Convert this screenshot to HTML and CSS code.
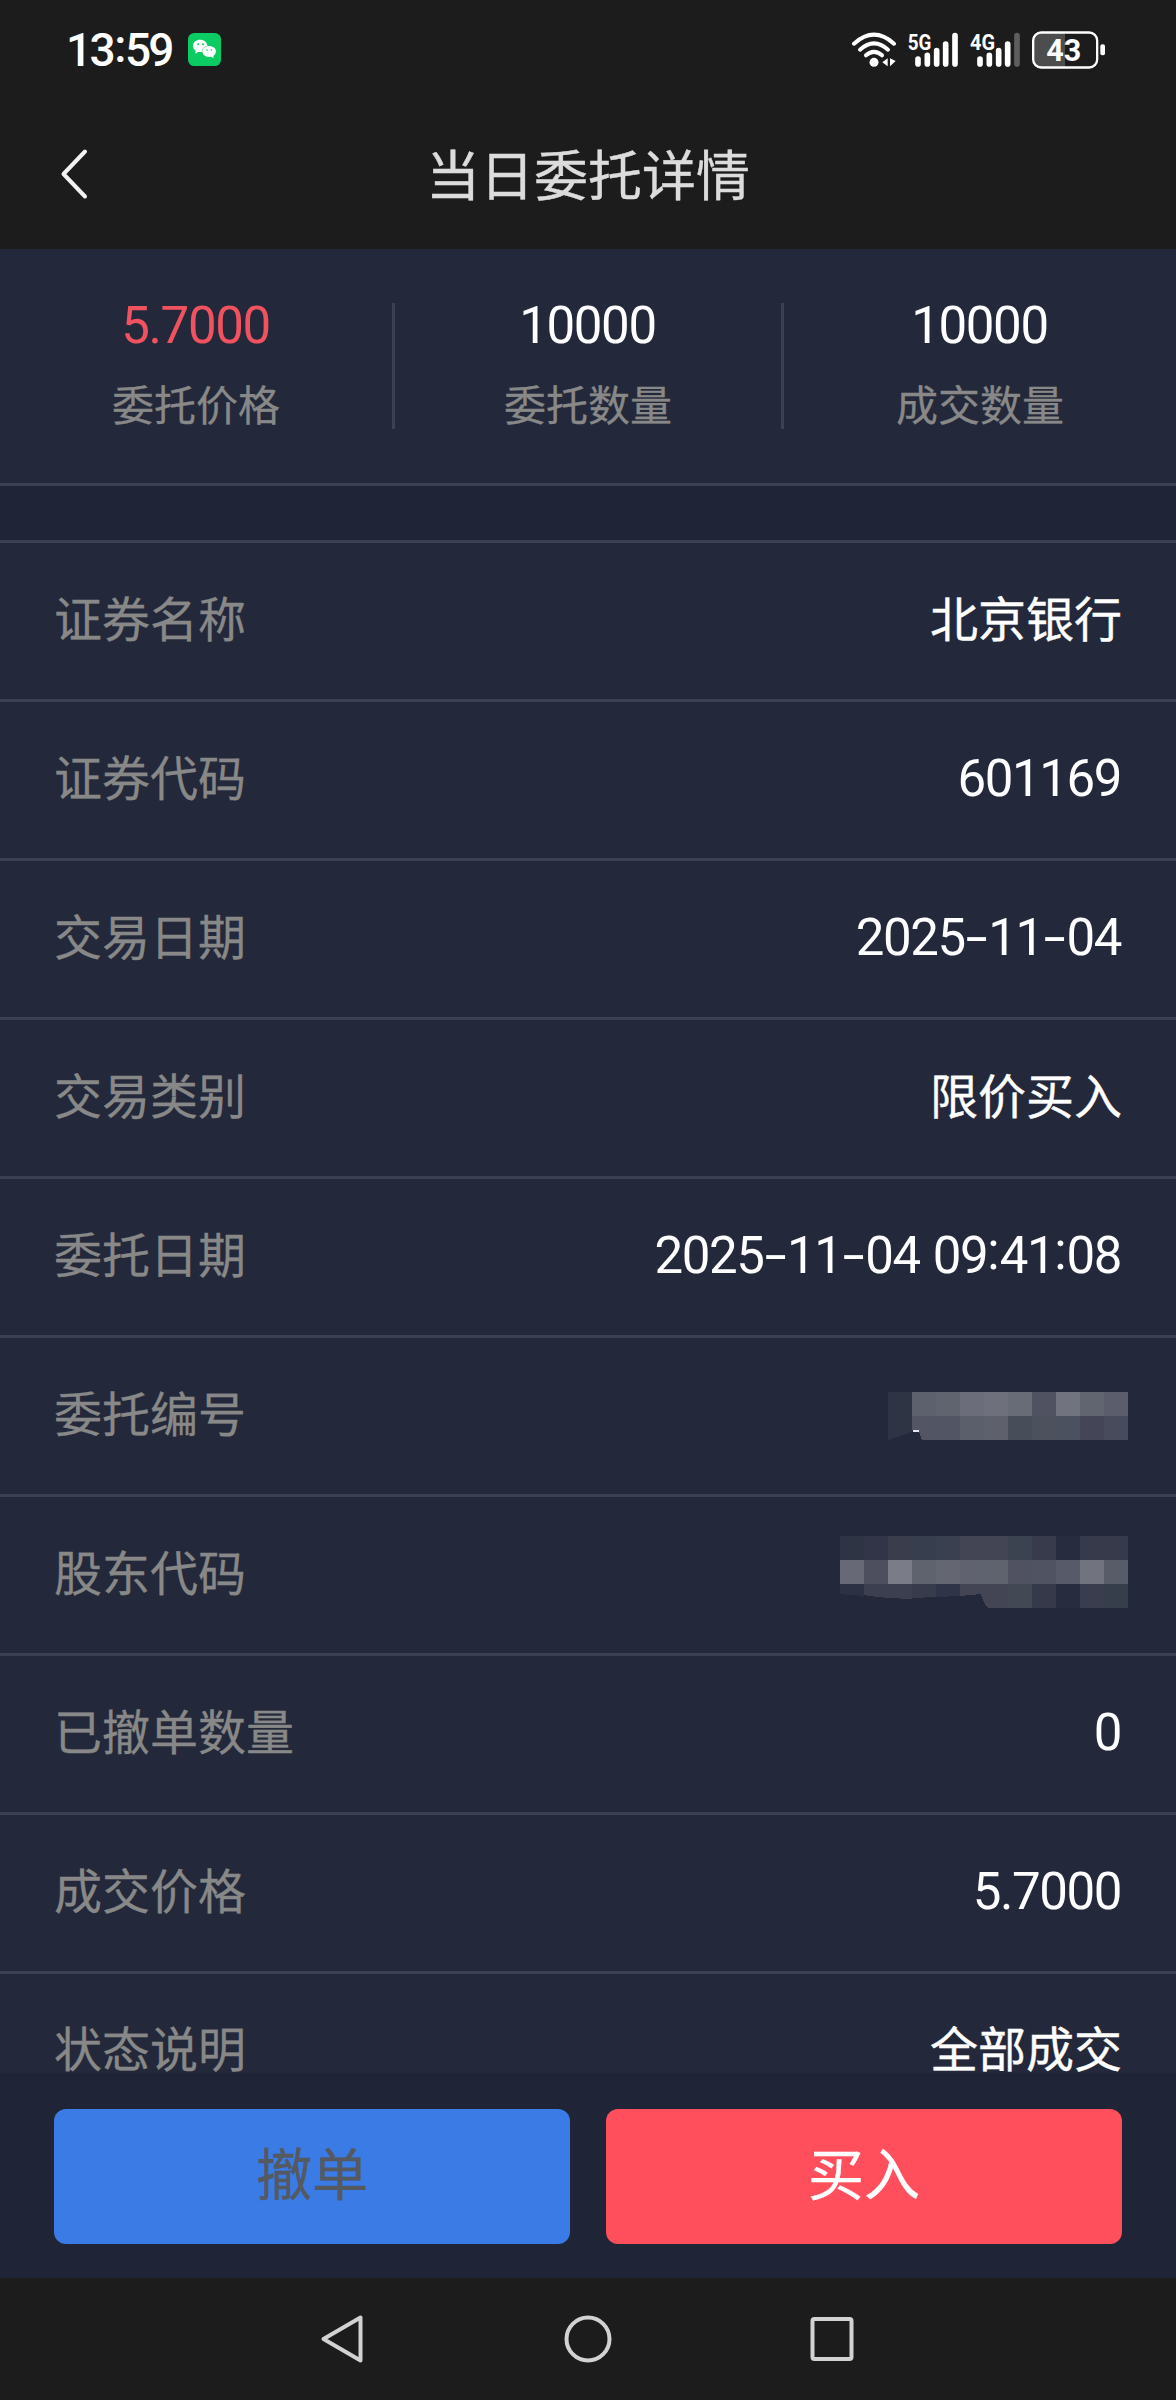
FILE: index.html
```html
<!DOCTYPE html>
<html lang="zh-CN">
<head>
<meta charset="utf-8">
<title>当日委托详情</title>
<link rel="stylesheet" href="styles.css">
</head>
<body>
<div class="screen">
  <div class="status-bar">
    <div class="status-left">
      <span class="clock">13<span class="clock-colon">:</span>59</span>
      <svg class="wechat" viewBox="0 0 99 99">
        <rect width="99" height="99" rx="19" fill="#0bcb63"/>
        <path d="M36 20C24 20 15 28 15 38C15 44 18 49 23 53L22 62L30 57Q36 58 42 56Q41 42 58 38C58 28 48 20 36 20Z" fill="#fff"/>
        <path d="M63 39C51 39 43 46 43 55C43 65 52 72 63 72L69 71L77 75L76 69Q84 64 84 55C84 46 75 39 63 39Z" fill="#fff"/>
        <g fill="#0bcb63"><circle cx="31" cy="34" r="3"/><circle cx="45" cy="34" r="3"/><circle cx="57" cy="51" r="2.5"/><circle cx="70" cy="51" r="2.5"/></g>
      </svg>
    </div>
    <svg class="status-icons" viewBox="60 50 780 135">
      <g fill="none" stroke="#fff" stroke-width="12" stroke-linecap="round">
        <path d="M72 100Q132 46 192 100"/>
        <path d="M90 118Q132 80 174 118"/>
        <path d="M108 135Q132 114 156 135"/>
      </g>
      <circle cx="132" cy="156" r="13.500" fill="#fff"/>
      <path d="M157 156L173 144V168ZM197 152L180 144V168Z" fill="#fff"/>
      <g class="network-type"><text x="233" y="118" textLength="71" lengthAdjust="spacingAndGlyphs">5G</text><text x="420" y="118" textLength="75" lengthAdjust="spacingAndGlyphs">4G</text></g>
      <g stroke="#fff" stroke-width="17" stroke-linecap="round">
        <path d="M264 146V161M292 135V161M320 121V161M347 101V161M375 76V161"/>
        <path d="M450 146V161M478 135V161M506 121V161M533 101V161"/>
        <path d="M561 76V161" stroke="#5e5e5e"/>
      </g>
      <path d="M632 68H705V169H632Q611 169 611 148V89Q611 68 632 68Z" fill="#4d4d4d"/>
      <rect x="609.500" y="66.500" width="192" height="105" rx="24" fill="none" stroke="#fff" stroke-width="7"/>
      <rect x="811" y="102" width="14" height="33" rx="6" fill="#fff"/>
      <text class="battery-level" x="649" y="152" textLength="105" lengthAdjust="spacingAndGlyphs">43</text>
    </svg>
  </div>

  <div class="title-bar">
    <svg class="back" viewBox="0 0 30 52"><path d="M27 3.500L5.500 26L27 48.500" fill="none" stroke="#f2f2f2" stroke-width="4" stroke-linecap="round" stroke-linejoin="round"/></svg>
    <h1 class="title">当日委托详情</h1>
  </div>

  <div class="summary">
    <div class="stat"><span class="stat-value price">5.7000</span><span class="stat-label">委托价格</span></div>
    <div class="stat"><span class="stat-value">10000</span><span class="stat-label">委托数量</span></div>
    <div class="stat"><span class="stat-value">10000</span><span class="stat-label">成交数量</span></div>
  </div>

  <div class="details">
    <div class="row"><span class="label">证券名称</span><span class="value">北京银行</span></div>
    <div class="row"><span class="label">证券代码</span><span class="value num">601169</span></div>
    <div class="row"><span class="label">交易日期</span><span class="value num">2025<span class="dash">-</span>11<span class="dash">-</span>04</span></div>
    <div class="row"><span class="label">交易类别</span><span class="value">限价买入</span></div>
    <div class="row"><span class="label">委托日期</span><span class="value num">2025<span class="dash">-</span>11<span class="dash">-</span>04 09<span class="colon">:</span>41<span class="colon">:</span>08</span></div>
    <div class="row"><span class="label">委托编号</span>
      <svg class="mask mask-order" viewBox="0 0 240 48" shape-rendering="crispEdges">
        <path d="M0 0H24V40L0 48Z" fill="#2e3444"/>
        <path d="M24 0h24v24h-24z" fill="#5d606d"/><path d="M48 0h24v24h-24z" fill="#60646e"/><path d="M72 0h24v24h-24z" fill="#6b6e7a"/><path d="M96 0h24v24h-24z" fill="#6e707c"/><path d="M120 0h24v24h-24z" fill="#686c77"/><path d="M144 0h24v24h-24z" fill="#505262"/><path d="M168 0h24v24h-24z" fill="#71737e"/><path d="M192 0h24v24h-24z" fill="#61656f"/><path d="M216 0h24v24h-24z" fill="#5b5d6c"/>
        <path d="M24 24H48V48H34L31 40L24 38Z" fill="#535565"/><path d="M48 24h24v24h-24z" fill="#525563"/><path d="M72 24h24v24h-24z" fill="#5b5e6b"/><path d="M96 24h24v24h-24z" fill="#5e616b"/><path d="M120 24h24v24h-24z" fill="#474e5a"/><path d="M144 24h24v24h-24z" fill="#4d505d"/><path d="M168 24h24v24h-24z" fill="#4b515e"/><path d="M192 24h24v24h-24z" fill="#444657"/><path d="M216 24h24v24h-24z" fill="#484b5b"/>
        <path d="M25 38h6v2h-6z" fill="#e6e8f0"/>
      </svg>
    </div>
    <div class="row"><span class="label">股东代码</span>
      <svg class="mask mask-holder" viewBox="0 0 288 72" shape-rendering="crispEdges">
        <path d="M0 0h24v24h-24z" fill="#2e3444"/><path d="M24 0h24v24h-24z" fill="#323548"/><path d="M48 0h24v24h-24z" fill="#3a3d4c"/><path d="M72 0h24v24h-24z" fill="#373e4d"/><path d="M96 0h24v24h-24z" fill="#3a404f"/><path d="M120 0h48v24h-48z" fill="#434555"/><path d="M168 0h24v24h-24z" fill="#3b4250"/><path d="M192 0h24v24h-24z" fill="#383b4b"/><path d="M216 0h24v24h-24z" fill="#272c3f"/><path d="M240 0h48v24h-48z" fill="#373a4a"/>
        <path d="M0 24h24v24h-24z" fill="#676a76"/><path d="M24 24h24v24h-24z" fill="#4d4f5f"/><path d="M48 24h24v24h-24z" fill="#7a7c87"/><path d="M72 24h24v24h-24z" fill="#5f636e"/><path d="M96 24h24v24h-24z" fill="#646772"/><path d="M120 24h24v24h-24z" fill="#60636f"/><path d="M144 24h24v24h-24z" fill="#5f636d"/><path d="M168 24h24v24h-24z" fill="#505261"/><path d="M192 24h24v24h-24z" fill="#505362"/><path d="M216 24h24v24h-24z" fill="#575a69"/><path d="M240 24h24v24h-24z" fill="#71737e"/><path d="M264 24h24v24h-24z" fill="#585c68"/>
        <path d="M0 48H24V60L0 58Z" fill="#2d3144"/><path d="M24 48H72V63Q40 62 24 59Z" fill="#3c3f4f"/><path d="M72 48H96V61L72 62Z" fill="#383b4c"/><path d="M96 48H120V60L96 61Z" fill="#303448"/><path d="M120 48H168V72H148Q143 66 141 58L120 60Z" fill="#434555"/><path d="M168 48h24v24h-24z" fill="#424955"/><path d="M192 48h24v24h-24z" fill="#363949"/><path d="M216 48h24v24h-24z" fill="#272c3f"/><path d="M240 48h24v24h-24z" fill="#3a3d4d"/><path d="M264 48h24v24h-24z" fill="#363d4b"/>
      </svg>
    </div>
    <div class="row"><span class="label">已撤单数量</span><span class="value num">0</span></div>
    <div class="row"><span class="label">成交价格</span><span class="value num">5.7000</span></div>
    <div class="row row-last"><span class="label">状态说明</span><span class="value">全部成交</span></div>
  </div>

  <div class="actions">
    <button class="btn btn-cancel">撤单</button>
    <button class="btn btn-buy">买入</button>
  </div>

  <div class="nav-bar">
    <svg class="nav-icon" viewBox="0 0 52 52"><path d="M42.500 4.500V47.500L5.500 26Z"/></svg>
    <svg class="nav-icon" viewBox="0 0 52 52"><circle cx="26" cy="26" r="21.500"/></svg>
    <svg class="nav-icon" viewBox="0 0 52 52"><rect x="6.500" y="6" width="39" height="40" rx="2"/></svg>
  </div>
</div>
</body>
</html>
```
FILE: styles.css
```css
* { box-sizing: border-box; }
body {
  margin: 0;
  background: #1c1c1c;
  color: #fff;
  font-family: "Noto Sans CJK SC", "Noto Sans", sans-serif;
}
svg { display: block; flex: none; }
.screen {
  display: flex;
  flex-direction: column;
  width: 1176px;
  height: 2400px;
  overflow: hidden;
}
.status-bar {
  display: flex;
  justify-content: space-between;
  height: 99px;
  padding: 27px 66px 0 66px;
}
.status-left { display: flex; align-items: flex-start; }
.clock {
  width: 122px;
  font-family: Roboto, sans-serif;
  font-size: 46px;
  font-weight: 500;
  line-height: 47px;
  letter-spacing: -2.7px;
}
.clock-colon {
  display: inline-block;
  width: 12px;
  text-align: center;
  transform: translateY(-4px);
}
.wechat { width: 33px; height: 33px; margin-top: 6px; }
.status-icons { width: 260px; height: 45px; }
.network-type { fill: #fff; font: 700 67px Roboto, sans-serif; }
.battery-level { fill: #fff; font: 700 94px Roboto, sans-serif; }

.title-bar {
  display: grid;
  grid-template-columns: 100px 1fr 100px;
  align-items: center;
  height: 150px;
  padding: 0 58px 3px;
}
.back { width: 30px; height: 52px; margin-top: 3px; }
.title {
  margin: 0;
  font-size: 54px;
  font-weight: 400;
  line-height: 80px;
  text-align: center;
  color: #dcdcdc;
  -webkit-text-stroke: 0.4px;
}

.summary {
  display: grid;
  grid-template-columns: repeat(3, 1fr);
  height: 237px;
  padding-top: 47px;
  /* short separators between the three figures */
  background:
    linear-gradient(#3b4052, #3b4052) 392px 54px / 3px 126px no-repeat,
    linear-gradient(#3b4052, #3b4052) 781px 54px / 3px 126px no-repeat,
    #23283a;
  border-bottom: 3px solid #3b4052;
}
.stat {
  display: flex;
  flex-direction: column;
  align-items: center;
  gap: 17px;
}
.stat-value, .num {
  font-family: Roboto, sans-serif;
  font-size: 51px;
  letter-spacing: -1.4px;
}
.stat-value { line-height: 60px; margin-left: -1px; }
.price { color: #f0535f; }
.stat-label {
  font-size: 42px;
  line-height: 60px;
  color: #888;
  -webkit-text-stroke: 0.3px;
}

.details {
  height: 1587px;
  padding-top: 54px;
  overflow: hidden;
  background: #1f2436;
}
.row {
  display: flex;
  align-items: center;
  justify-content: space-between;
  height: 159px;
  padding: 0 54px 11px;
  border-top: 3px solid #3b4052;
  background: #23283a;
  font-size: 48px;
  line-height: 72px;
}
.row-last {
  align-items: flex-start;
  height: 102px;
  padding: 47px 54px 0;
  line-height: 51px;
}
.label { color: #888; -webkit-text-stroke: 0.3px; }
.value { -webkit-text-stroke: 0.4px; }
.num {
  padding-top: 9px;
  margin-right: 1px;
  word-spacing: 1.8px;
  -webkit-text-stroke: 0;
}
.dash, .colon { display: inline-block; text-align: center; letter-spacing: 0; }
.dash { width: 23.6px; transform: scaleX(1.55); }
.colon { width: 12.3px; transform: translateY(-4px); }
.mask { margin-right: -6px; }
.mask-order { width: 240px; height: 48px; margin-top: 11px; }
.mask-holder { width: 288px; height: 72px; margin-top: 5px; }

.actions {
  display: flex;
  gap: 36px;
  height: 205px;
  padding: 36px 54px 34px;
  background: #1f2436;
}
.btn {
  flex: 1;
  padding: 0 0 11px;
  border: 0;
  border-radius: 12px;
  font-family: inherit;
  font-size: 56px;
  line-height: 80px;
  -webkit-text-stroke: 0.4px;
}
.btn-cancel { background: #3b7be6; color: #555960; }
.btn-buy { background: #ff4e5c; color: #fff; }

.nav-bar {
  display: flex;
  justify-content: center;
  gap: 192px;
  height: 122px;
  padding-top: 35px;
}
.nav-icon {
  width: 52px;
  height: 52px;
  fill: none;
  stroke: #d2d2d2;
  stroke-width: 4;
  stroke-linejoin: round;
}
```
